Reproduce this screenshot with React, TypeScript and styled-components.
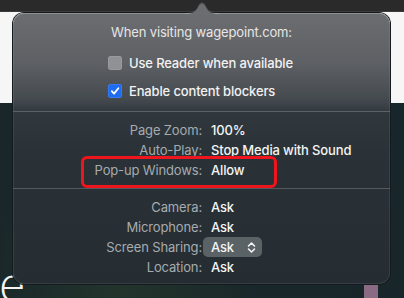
import React from "react";
import styled, { createGlobalStyle } from "styled-components";

const GlobalStyle = createGlobalStyle`
  html, body {
    margin: 0;
    padding: 0;
    width: 404px;
    height: 298px;
    overflow: hidden;
    background: #1b282b;
  }
  * {
    box-sizing: border-box;
  }
`;

const Page = styled.div`
  position: relative;
  width: 404px;
  height: 298px;
  display: flex;
  flex-direction: column;
  font-family: Inter, "Liberation Sans", sans-serif;
  overflow: hidden;
`;

const TopBar = styled.div`
  height: 12px;
  background: #2a2a2a;
  border-bottom: 1px solid #3b3b3b;
`;

const WhitePane = styled.div`
  height: 91px;
  background: #f6f6f6;
`;

const DarkPane = styled.div`
  position: relative;
  flex: 1;
  background: radial-gradient(circle at 30% 90%, #22352c 0%, #1a272a 40%, #17262a 100%);
`;

// big heading letter behind the popover, cut by the window edge as in the shot
const BigLetter = styled.span`
  position: absolute;
  left: -1px;
  top: 157px;
  font-family: "Open Sans", sans-serif;
  font-weight: 300;
  font-size: 48px;
  line-height: 48px;
  color: #f4f4f4;
`;

const PinkStrip = styled.div`
  position: absolute;
  right: 26px;
  bottom: 0;
  width: 14px;
  height: 14px;
  background: #8b6b84;
`;

const Popover = styled.div`
  position: absolute;
  left: 13px;
  top: 13px;
  width: 377px;
  height: 271px;
  border-radius: 11px;
  background: linear-gradient(
    to bottom,
    #6c6d70 0px,
    #5d6064 50px,
    #464b50 85px,
    #30383d 100px,
    #2a3237 140px,
    #252d32 271px
  );
  box-shadow: 0 0 0 1px #141a1d, inset 0 1px 0 rgba(255, 255, 255, 0.18),
    inset 0 0 0 1px rgba(255, 255, 255, 0.08);
  display: flex;
  flex-direction: column;
  color: #f0f0f0;
  font-size: 13px;
  letter-spacing: -0.15px;
`;

const Arrow = styled.svg`
  position: absolute;
  left: 172px;
  top: -13px;
  width: 34px;
  height: 14px;
`;

const Title = styled.div`
  margin-top: 11px;
  height: 16px;
  line-height: 16px;
  text-align: center;
  color: #e6e6e6;
`;

const CheckList = styled.div`
  display: flex;
  flex-direction: column;
  gap: 8px;
  padding: 13px 0 10px 95px;
`;

const CheckRow = styled.label`
  display: flex;
  align-items: center;
  gap: 7px;
  height: 20px;
  color: #f2f2f2;
  font-weight: 500;
`;

const Box = styled.span<{ $checked?: boolean }>`
  width: 14px;
  height: 14px;
  border-radius: 3px;
  display: flex;
  align-items: center;
  justify-content: center;
  background: ${(p) => (p.$checked ? "#1f6cf2" : "#8f9194")};
  box-shadow: inset 0 0 0 0.5px rgba(255, 255, 255, 0.2);
`;

const Separator = styled.div`
  height: 1px;
  background: rgba(255, 255, 255, 0.2);
`;

const Settings = styled.div<{ $pt: number; $pb: number }>`
  display: grid;
  grid-template-columns: 189px 1fr;
  column-gap: 9px;
  grid-auto-rows: 20px;
  align-items: center;
  padding: ${(p) => p.$pt}px 0 ${(p) => p.$pb}px;
`;

const Label = styled.div`
  text-align: right;
  color: #a6abaf;
  white-space: nowrap;
`;

const Value = styled.div`
  color: #f4f4f4;
  font-weight: 500;
  white-space: nowrap;
`;

const PopupButton = styled.div`
  margin-left: -8px;
  width: 59px;
  height: 20px;
  padding: 0 6px 0 8px;
  border-radius: 5px;
  background: #5b6266;
  display: flex;
  align-items: center;
  justify-content: space-between;
  color: #f4f4f4;
  font-weight: 500;
`;

const Highlight = styled.div`
  position: absolute;
  left: 68px;
  top: 143px;
  width: 196px;
  height: 32px;
  border: 3.5px solid #f0141c;
  border-radius: 6px;
`;

function Check() {
  return (
    <svg width="10" height="10" viewBox="0 0 10 10">
      <path d="M1.8 5.2 L4 7.6 L8.4 2.2" fill="none" stroke="#fff" strokeWidth="1.8" strokeLinecap="round" strokeLinejoin="round" />
    </svg>
  );
}

function UpDown() {
  return (
    <svg width="9" height="13" viewBox="0 0 9 13">
      <path d="M1.5 5 L4.5 2 L7.5 5 M1.5 8 L4.5 11 L7.5 8" fill="none" stroke="#f4f4f4" strokeWidth="1.6" strokeLinecap="round" strokeLinejoin="round" />
    </svg>
  );
}

const general = [
  { label: "Page Zoom:", value: "100%" },
  { label: "Auto-Play:", value: "Stop Media with Sound" },
  { label: "Pop-up Windows:", value: "Allow" },
];

const devices = [
  { label: "Camera:", value: "Ask" },
  { label: "Microphone:", value: "Ask" },
  { label: "Screen Sharing:", value: "Ask", popup: true },
  { label: "Location:", value: "Ask" },
];

export default function App() {
  return (
    <>
      <GlobalStyle />
      <Page>
        <TopBar />
        <WhitePane />
        <DarkPane>
          <BigLetter>e</BigLetter>
          <PinkStrip />
        </DarkPane>

        <Popover>
          <Arrow viewBox="0 0 34 14">
            <path d="M0 14 C8 14 11 12 14 6 C15.5 2.5 18.5 2.5 20 6 C23 12 26 14 34 14 Z" fill="#6c6d70" />
            <path d="M0 13.5 C8 13.5 11 11.5 14 5.5 C15.5 2 18.5 2 20 5.5 C23 11.5 26 13.5 34 13.5" fill="none" stroke="rgba(255,255,255,0.18)" strokeWidth="1" />
          </Arrow>
          <Title>When visiting wagepoint.com:</Title>
          <CheckList>
            <CheckRow>
              <Box />
              Use Reader when available
            </CheckRow>
            <CheckRow>
              <Box $checked>
                <Check />
              </Box>
              Enable content blockers
            </CheckRow>
          </CheckList>
          <Separator />
          <Settings $pt={8} $pb={8}>
            {general.map((row) => (
              <React.Fragment key={row.label}>
                <Label>{row.label}</Label>
                <Value>{row.value}</Value>
              </React.Fragment>
            ))}
          </Settings>
          <Separator />
          <Settings $pt={8} $pb={0}>
            {devices.map((row) => (
              <React.Fragment key={row.label}>
                <Label>{row.label}</Label>
                {row.popup ? (
                  <PopupButton>
                    {row.value}
                    <UpDown />
                  </PopupButton>
                ) : (
                  <Value>{row.value}</Value>
                )}
              </React.Fragment>
            ))}
          </Settings>
          <Highlight />
        </Popover>
      </Page>
    </>
  );
}
